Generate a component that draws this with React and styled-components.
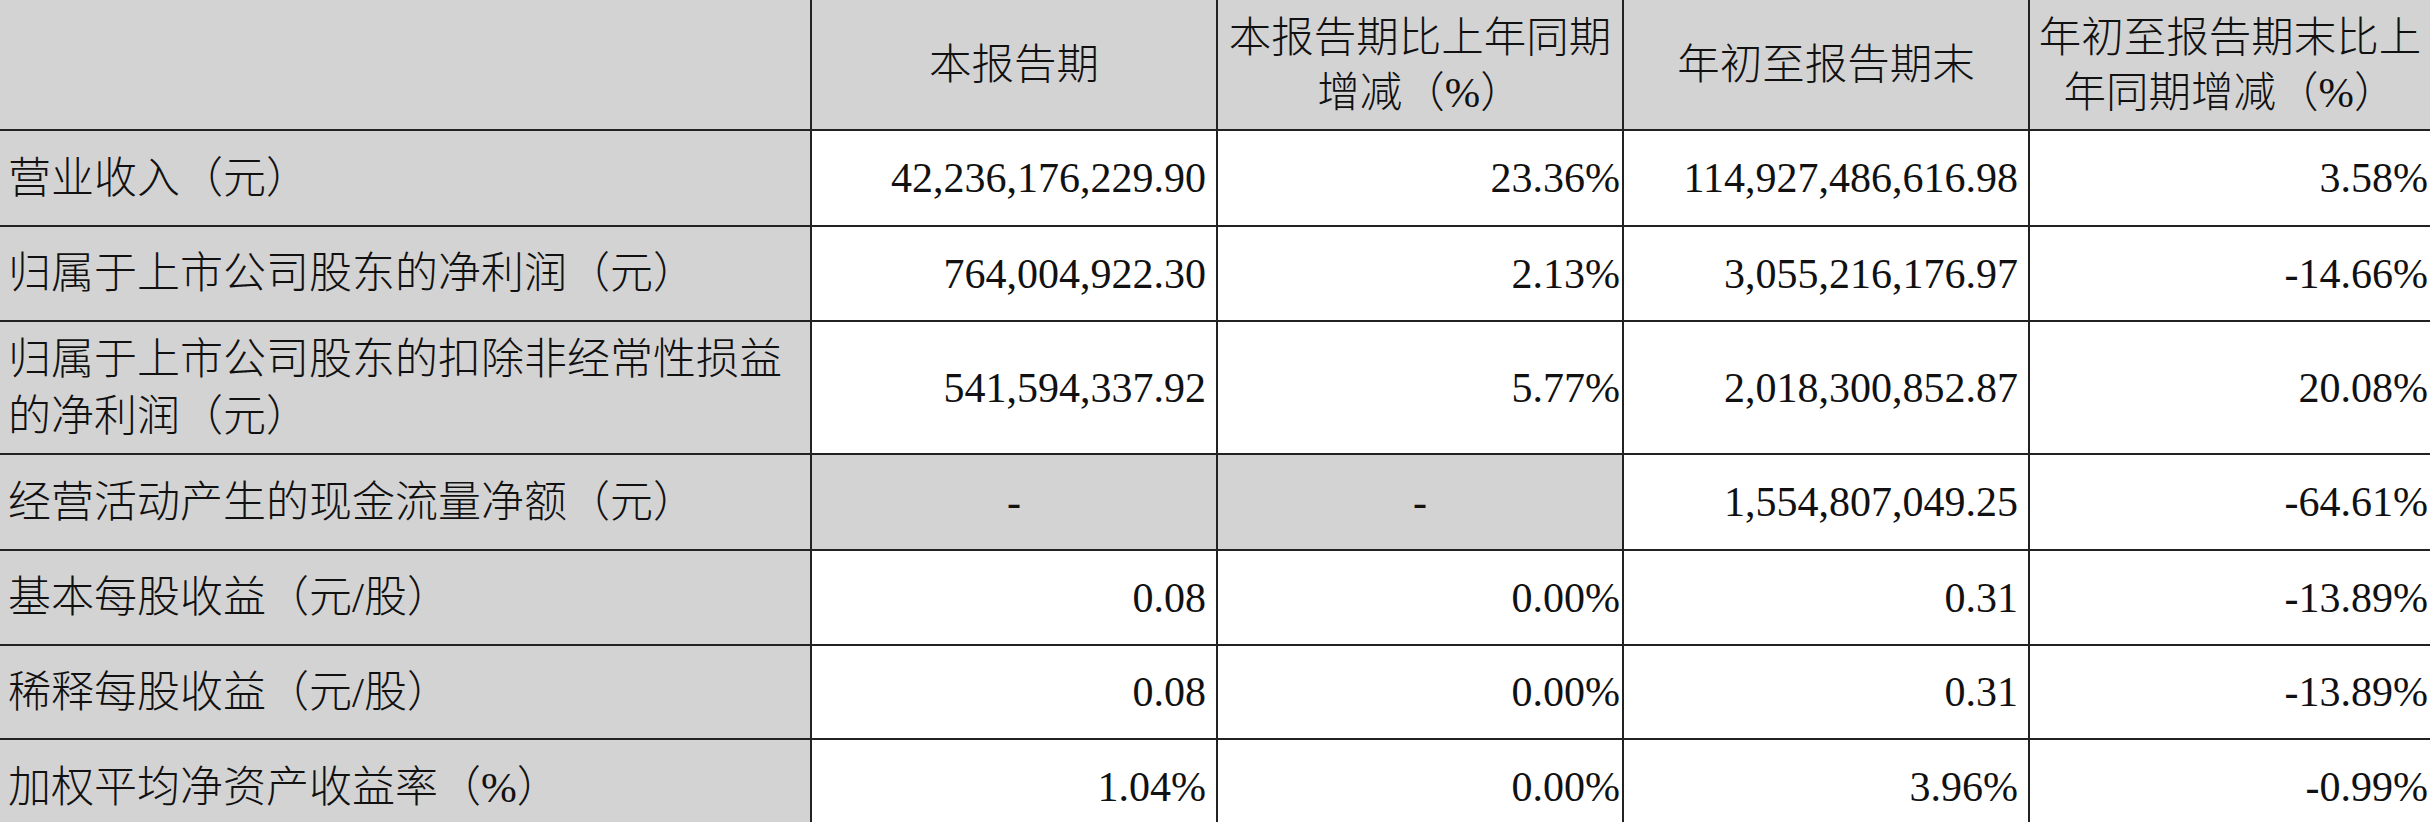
import React from "react";
import styled, { createGlobalStyle } from "styled-components";

const GlobalStyle = createGlobalStyle`
  html, body {
    margin: 0;
    padding: 0;
    background: #ffffff;
    overflow: hidden;
  }
  #root {
    width: 2430px;
    height: 822px;
    overflow: hidden;
  }
`;

const Table = styled.div`
  display: grid;
  grid-template-columns: 810px 406px 406px 406px 402px;
  grid-template-rows: 129px 96px 95px 133px 96px 95px 94px 96px;
  width: 2430px;
  font-family: "Liberation Serif", "Noto Sans CJK SC", serif;
  color: #111111;
`;

const padFor = (p) => {
  if (p.$align === "center") return "0 6px";
  if (p.$align === "right") return p.$tight ? "0 2px 0 0" : "0 10px 0 0";
  return "0 0 0 8px";
};

const Cell = styled.div`
  box-sizing: border-box;
  display: flex;
  align-items: center;
  justify-content: ${(p) =>
    p.$align === "center" ? "center" : p.$align === "right" ? "flex-end" : "flex-start"};
  text-align: ${(p) => p.$align || "left"};
  background: ${(p) => (p.$shade ? "#d3d3d3" : "#ffffff")};
  border-left: ${(p) => (p.$first ? "none" : "2px solid #222222")};
  border-top: ${(p) => (p.$top ? "none" : "2px solid #222222")};
  padding: ${padFor};
  white-space: nowrap;
`;

const HeadText = styled.span`
  font-size: 42.5px;
  line-height: 55px;
  font-weight: 300;
`;

const LabelText = styled.span`
  font-size: 43px;
  line-height: 57px;
  font-weight: 300;
`;

const NumText = styled.span`
  font-size: 42px;
  line-height: 50px;
`;

const headers = [
  ["本报告期"],
  ["本报告期比上年同期", "增减（%）"],
  ["年初至报告期末"],
  ["年初至报告期末比上", "年同期增减（%）"],
];

const rows = [
  { label: ["营业收入（元）"], values: ["42,236,176,229.90", "23.36%", "114,927,486,616.98", "3.58%"] },
  { label: ["归属于上市公司股东的净利润（元）"], values: ["764,004,922.30", "2.13%", "3,055,216,176.97", "-14.66%"] },
  {
    label: ["归属于上市公司股东的扣除非经常性损益", "的净利润（元）"],
    values: ["541,594,337.92", "5.77%", "2,018,300,852.87", "20.08%"],
  },
  { label: ["经营活动产生的现金流量净额（元）"], values: ["-", "-", "1,554,807,049.25", "-64.61%"] },
  { label: ["基本每股收益（元/股）"], values: ["0.08", "0.00%", "0.31", "-13.89%"] },
  { label: ["稀释每股收益（元/股）"], values: ["0.08", "0.00%", "0.31", "-13.89%"] },
  { label: ["加权平均净资产收益率（%）"], values: ["1.04%", "0.00%", "3.96%", "-0.99%"] },
];

const Lines = ({ parts, As }) => (
  <As>
    {parts.map((p, i) => (
      <React.Fragment key={i}>
        {i > 0 && <br />}
        {p}
      </React.Fragment>
    ))}
  </As>
);

export default function App() {
  return (
    <>
      <GlobalStyle />
      <Table>
        <Cell $first $top $shade />
        {headers.map((h, i) => (
          <Cell key={i} $top $shade $align="center">
            <Lines parts={h} As={HeadText} />
          </Cell>
        ))}
        {rows.map((r, ri) => (
          <React.Fragment key={ri}>
            <Cell $first $shade>
              <Lines parts={r.label} As={LabelText} />
            </Cell>
            {r.values.map((v, vi) => {
              const dash = v === "-";
              return (
                <Cell
                  key={vi}
                  $shade={dash}
                  $align={dash ? "center" : "right"}
                  $tight={vi % 2 === 1}
                >
                  <NumText>{v}</NumText>
                </Cell>
              );
            })}
          </React.Fragment>
        ))}
      </Table>
    </>
  );
}
